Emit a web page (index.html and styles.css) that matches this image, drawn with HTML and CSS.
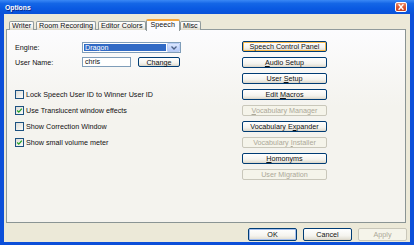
FILE: index.html
```html
<!DOCTYPE html>
<html>
<head>
<meta charset="utf-8">
<title>Options</title>
<link rel="stylesheet" href="styles.css">
</head>
<body>
<div class="window">
  <div class="titlebar">
    <span class="title">Options</span>
    <span class="close"><svg viewBox="0 0 10 8" width="10" height="8"><path d="M2.6 1.3 L7.4 6.7 M7.4 1.3 L2.6 6.7" stroke="#fff" stroke-width="1.4" fill="none"/></svg></span>
  </div>
  <div class="frame">
    <div class="tabs">
      <div class="tab">Writer</div>
      <div class="tab">Room Recording</div>
      <div class="tab">Editor Colors</div>
      <div class="tab active">Speech</div>
      <div class="tab">Misc</div>
    </div>
    <div class="panel">
      <div class="left">
        <div class="field-row engine">
          <span class="label">Engine:</span>
          <div class="combo">
            <span class="combo-value">Dragon</span>
            <span class="combo-btn"><svg viewBox="0 0 8 6" width="8" height="6"><path d="M1.5 1.5 L4 4 L6.5 1.5" stroke="#4d6185" stroke-width="1.3" fill="none"/></svg></span>
          </div>
        </div>
        <div class="field-row user">
          <span class="label">User Name:</span>
          <span class="input">chris</span>
          <span class="btn change"><span>Change</span></span>
        </div>
        <div class="checks">
          <div class="check"><span class="box"></span><span>Lock Speech User ID to Winner User ID</span></div>
          <div class="check"><span class="box"><svg viewBox="0 0 9 9" width="7" height="7"><path d="M1.5 4.5 L3.6 6.6 L7.5 2.2" stroke="#21a121" stroke-width="1.6" fill="none"/></svg></span><span>Use Translucent window effects</span></div>
          <div class="check"><span class="box"></span><span>Show Correction Window</span></div>
          <div class="check"><span class="box"><svg viewBox="0 0 9 9" width="7" height="7"><path d="M1.5 4.5 L3.6 6.6 L7.5 2.2" stroke="#21a121" stroke-width="1.6" fill="none"/></svg></span><span>Show small volume meter</span></div>
        </div>
      </div>
      <div class="right">
        <span class="btn hot"><span>Speech Control Panel</span></span>
        <span class="btn"><span><u>A</u>udio Setup</span></span>
        <span class="btn"><span>User <u>S</u>etup</span></span>
        <span class="btn"><span>Edit <u>M</u>acros</span></span>
        <span class="btn disabled"><span><u>V</u>ocabulary Manager</span></span>
        <span class="btn"><span>Vocabulary E<u>x</u>pander</span></span>
        <span class="btn disabled"><span>Vocabulary <u>I</u>nstaller</span></span>
        <span class="btn"><span><u>H</u>omonyms</span></span>
        <span class="btn disabled"><span>User Migration</span></span>
      </div>
    </div>
    <div class="footer">
      <span class="btn big default"><span>OK</span></span>
      <span class="btn big"><span>Cancel</span></span>
      <span class="btn big disabled"><span>Apply</span></span>
    </div>
  </div>
</div>
</body>
</html>
```

FILE: styles.css
```css
* { box-sizing: border-box; }
html, body { margin: 0; padding: 0; }
body {
  width: 414px;
  height: 245px;
  overflow: hidden;
  font-family: "Liberation Sans", Arial, sans-serif;
  font-size: 7.2px;
  color: #111;
  background: #ece9d8;
}
.window {
  width: 414px;
  height: 245px;
  display: flex;
  flex-direction: column;
}
.titlebar {
  height: 14px;
  flex: none;
  display: flex;
  align-items: center;
  justify-content: space-between;
  padding: 0 7px 0 5px;
  background: linear-gradient(#3a88f5 0%, #1466e6 25%, #0a5ae2 60%, #0a52d8 100%);
}
.title {
  color: #fff;
  font-weight: bold;
  font-size: 6.8px;
  text-shadow: 1px 1px 0 #0a2a8a;
}
.close {
  width: 12px;
  height: 10px;
  border: 1px solid #fff;
  border-radius: 2px;
  background: linear-gradient(#eb906f, #dc5631 50%, #c8421f);
  display: flex;
  align-items: center;
  justify-content: center;
}
.frame {
  flex: 1;
  display: flex;
  flex-direction: column;
  background: #ece9d8;
  border-style: solid;
  border-color: #0c4fd9;
  border-width: 0 4px 3px 4px;
  padding: 5px 4px 0 2px;
}
.tabs {
  height: 11px;
  flex: none;
  display: flex;
  align-items: flex-end;
  padding-left: 3px;
  gap: 2px;
  position: relative;
  z-index: 2;
}
.tab {
  height: 9.5px;
  padding: 0 2px;
  border: 1px solid #919b9c;
  border-bottom: none;
  border-radius: 2px 2px 0 0;
  background: linear-gradient(#ffffff, #f2f1ec 60%, #dcd8c8);
  line-height: 8.5px;
  white-space: nowrap;
}
.tab.active {
  height: 11.5px;
  margin: 0 -2px -0.5px;
  padding: 0 4px;
  border-top: 2px solid #f3a53c;
  background: #fcfcfe;
  line-height: 8.5px;
  position: relative;
  z-index: 3;
}
.panel {
  flex: none;
  height: 194px;
  margin-top: -1px;
  border: 1px solid #919b9c;
  border-right-color: #8a9494;
  border-bottom-color: #8a9494;
  background: linear-gradient(#fcfcfe, #f4f3ee 40%, #f4f3ee);
  display: grid;
  grid-template-columns: 235px 85px;
  align-items: start;
  position: relative;
  z-index: 1;
}
.left {
  padding: 12px 0 0 8px;
  display: flex;
  flex-direction: column;
}
.field-row {
  display: flex;
  align-items: center;
}
.field-row.engine { height: 11px; }
.field-row.user { height: 10px; margin-top: 4px; }
.label { width: 67px; flex: none; white-space: nowrap; }
.combo {
  width: 99px;
  height: 11px;
  border: 1px solid #7f9db9;
  background: #fff;
  display: flex;
  align-items: stretch;
  padding: 1px;
}
.combo-value {
  flex: 1;
  background: #316ac5;
  color: #fff;
  line-height: 7px;
  padding-left: 1px;
  margin-right: 1px;
}
.combo-btn {
  width: 13px;
  flex: none;
  margin: -1px -1px -1px 0;
  border: 1px solid #b9cdf5;
  border-radius: 1px;
  background: linear-gradient(#dbe6fd, #c3d4fb 60%, #b4c9f7);
  display: flex;
  align-items: center;
  justify-content: center;
}
.input {
  width: 49px;
  height: 10px;
  border: 1px solid #7f9db9;
  background: #fff;
  line-height: 8px;
  padding-left: 2px;
  flex: none;
}
.btn {
  display: flex;
  align-items: center;
  justify-content: center;
  height: 11px;
  border: 1px solid #003c74;
  border-radius: 2px;
  background: linear-gradient(#ffffff, #f5f4ef 60%, #e4e1d6 90%, #d6d0c5);
  white-space: nowrap;
  line-height: 9px;
}
.btn u { text-decoration: underline; text-underline-offset: 0.5px; }
.btn.change {
  width: 42px;
  height: 10px;
  margin-left: 7px;
  flex: none;
}
.btn.hot { box-shadow: inset 0 0 0 1px #f8b84a; }
.btn.disabled {
  border-color: #c9c7ba;
  color: #aca899;
  background: #f5f4ea;
}
.checks {
  margin-top: 23px;
  display: flex;
  flex-direction: column;
  gap: 7px;
}
.check {
  height: 9px;
  display: flex;
  align-items: center;
  gap: 2px;
  white-space: nowrap;
}
.box {
  width: 9px;
  height: 9px;
  flex: none;
  border: 1px solid #1c5180;
  background: linear-gradient(135deg, #dcdcd7, #fbfbf9);
  display: flex;
  align-items: center;
  justify-content: center;
}
.right {
  padding-top: 11px;
  display: flex;
  flex-direction: column;
  gap: 5px;
}
.footer {
  flex: none;
  display: flex;
  justify-content: flex-end;
  gap: 6px;
  padding-top: 5px;
  margin-right: -1px;
}
.btn.big {
  width: 49px;
  height: 13px;
}
.btn.default { box-shadow: inset 0 0 0 1px #a6c0ee; }
```
